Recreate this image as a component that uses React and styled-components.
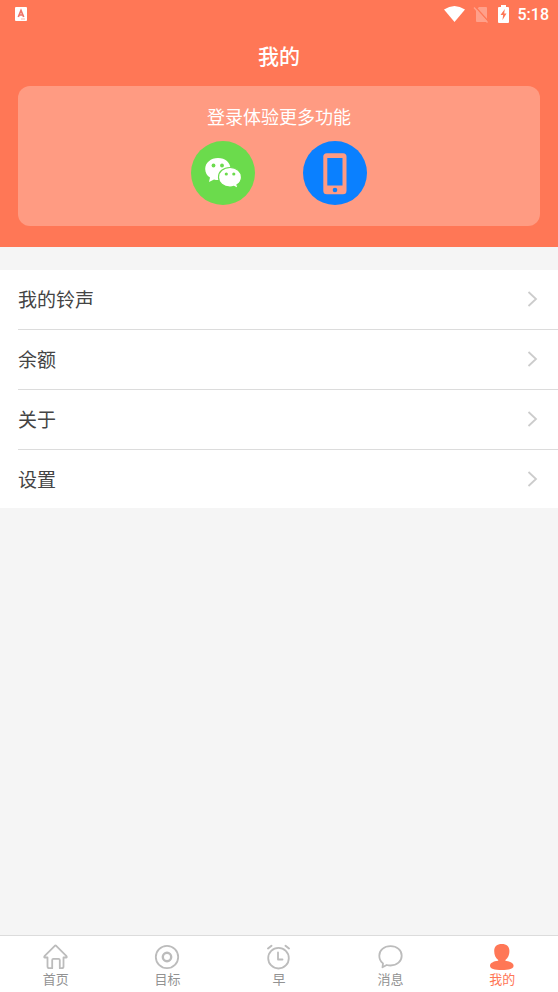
import React from "react";
import styled, { createGlobalStyle } from "styled-components";

const GlobalStyle = createGlobalStyle`
  * { box-sizing: border-box; }
  body { margin: 0; background: #f5f5f5; font-family: "Noto Sans CJK SC", sans-serif; }
  h1, h2, ul { margin: 0; padding: 0; }
  svg { display: block; flex: none; }
`;

const Page = styled.div`
  display: flex;
  flex-direction: column;
  min-height: 100vh;
`;

const Header = styled.header`
  padding: 0 18px 21px;
  background: #ff7756;
  color: #fff;
`;

const StatusBar = styled.div`
  display: flex;
  align-items: center;
  height: 28px;
  margin: 0 -9px 0 -4px;
`;

const StatusIcons = styled.div`
  display: flex;
  align-items: center;
  gap: 8px;
  margin-left: auto;
`;

const Clock = styled.time`
  font: 500 16px/28px Roboto, sans-serif;
  padding-top: 1px;
`;

const Title = styled.h1`
  height: 58px;
  font-size: 21px;
  font-weight: 500;
  line-height: 54px;
  text-align: center;
`;

const LoginCard = styled.section`
  padding: 16px 0 21px;
  border-radius: 12px;
  background: #ff9b82;
`;

const LoginTitle = styled.h2`
  font-size: 18px;
  font-weight: 400;
  line-height: 28px;
  text-align: center;
`;

const LoginOptions = styled.div`
  display: flex;
  justify-content: center;
  gap: 48px;
  margin-top: 11px;
`;

const LoginButton = styled.button`
  width: 64px;
  height: 64px;
  padding: 0;
  border: 0;
  border-radius: 50%;
  background: ${(p) => p.$color};
  cursor: pointer;
`;

const Menu = styled.ul`
  margin-top: 23px;
  padding-left: 18px;
  background: #fff;
  list-style: none;
`;

const MenuItem = styled.li`
  border-bottom: 1px solid #dcdcdc;
  &:last-child { border-bottom: 0; }
`;

const MenuLink = styled.a`
  display: flex;
  align-items: center;
  justify-content: space-between;
  height: 59px;
  padding: 0 20px 1px 0;
  color: #444;
  font-size: 19px;
  line-height: 28px;
  text-decoration: none;
  ${MenuItem}:last-child & { height: 58px; }
`;

const TabBar = styled.nav`
  display: grid;
  grid-template-columns: repeat(5, 1fr);
  margin-top: auto;
  border-top: 1px solid #dcdcdc;
  background: #fff;
`;

const Tab = styled.a`
  display: flex;
  flex-direction: column;
  align-items: center;
  height: 56px;
  padding-top: 8px;
  color: ${(p) => (p.$active ? "#ff7756" : "#929292")};
  font-size: 13px;
  line-height: 18px;
  text-decoration: none;
  svg { color: ${(p) => (p.$active ? "#ff7756" : "#bcbcbc")}; }
`;

const InputIcon = () => (
  <svg width="14" height="14" viewBox="0 0 14 14" aria-hidden="true">
    <rect x="1" width="12" height="14" rx="1" fill="#fff" />
    <path d="M4.300 10 7 3.500l2.700 6.500M5.300 8h3.400" fill="none" stroke="#ef7468" strokeWidth="1.700" />
    <path d="M7 12h4" stroke="#ffb5a5" />
  </svg>
);

const WifiIcon = () => (
  <svg width="21" height="17" viewBox="0 0 21 17" aria-hidden="true">
    <path d="M0 3.500Q10.500-3.500 21 3.500L10.500 16Z" fill="#fff" />
  </svg>
);

const NoSimIcon = () => (
  <svg width="16" height="17" viewBox="0 0 16 17" aria-hidden="true">
    <path d="M6 1h7q1 0 1 1v13q0 1-1 1H4q-1 0-1-1V4Z" fill="#ffa08a" />
    <path d="m2.500 1 13 14.500" stroke="#ff7756" strokeWidth="1.500" />
    <path d="m1 1.500 13.500 15" stroke="#ffa08a" strokeWidth="1.400" />
  </svg>
);

const BatteryIcon = () => (
  <svg width="13" height="19" viewBox="0 0 13 19" aria-hidden="true">
    <path d="M4 0h5v2h2q1 0 1 1v14q0 1-1 1H2q-1 0-1-1V3q0-1 1-1h2Z" fill="#fff" />
    <path d="M7.800 4 3.500 10h2.600l-.6 5 4-6.500H7.200Z" fill="#ff7756" />
  </svg>
);

const WeChatIcon = () => (
  <svg width="64" height="64" viewBox="0 0 64 64" aria-hidden="true">
    <path d="M27 17C19.800 17 14.200 21.700 14.200 28c0 3.600 1.800 6.600 4.800 8.600L18 41l5-2.600c1.300.4 2.700.6 4 .6C34.300 39 39.500 34.500 39.500 28S34.300 17 27 17Z" fill="#fff" />
    <path d="M39 26.500c-6.700 0-11.500 4.100-11.500 9.700S32.300 46 39 46c1.400 0 2.700-.2 3.900-.6l4.200 2.100-1.100-3.700c2.800-1.800 4.500-4.500 4.500-7.600 0-5.600-4.800-9.700-11.500-9.700Z" fill="#fff" stroke="#6bdb4c" strokeWidth="1.200" />
    <g fill="#6bdb4c">
      <circle cx="22.500" cy="24.500" r="1.900" /><circle cx="31" cy="24.500" r="1.900" />
      <circle cx="35.300" cy="33" r="1.600" /><circle cx="42.800" cy="33" r="1.600" />
    </g>
  </svg>
);

const PhoneIcon = () => (
  <svg width="64" height="64" viewBox="0 0 64 64" aria-hidden="true">
    <rect x="20.300" y="12.300" width="23.200" height="41" rx="3.500" fill="#ff9b82" />
    <rect x="24.300" y="17" width="15.200" height="27.500" fill="#0a80ff" />
    <circle cx="32" cy="49" r="2.300" fill="#0a80ff" />
  </svg>
);

const ChevronIcon = () => (
  <svg width="12" height="18" viewBox="0 0 12 18" fill="none" stroke="#ccc" strokeWidth="1.800" aria-hidden="true">
    <path d="m2.500 2 7.500 7-7.500 7" />
  </svg>
);

const TabIcon = ({ children }) => (
  <svg width="26" height="26" viewBox="0 0 26 26" fill="none" stroke="currentColor" strokeWidth="1.800" strokeLinejoin="round" strokeLinecap="round" aria-hidden="true">
    {children}
  </svg>
);

const menu = ["我的铃声", "余额", "关于", "设置"];

const tabs = [
  {
    label: "首页",
    icon: <path d="M11.800 1.800q.7-.6 1.400 0L23.500 12.200q.8 1.100-.5 1.300H20.500v9q0 1.700-1.700 1.700h-2V16q0-1.200-1.200-1.200h-5.200q-1.200 0-1.200 1.200v8.200H6.200Q4.500 24.200 4.500 22.500v-9H2q-1.300-.2-.5-1.300Z" />,
  },
  {
    label: "目标",
    icon: <><circle cx="13" cy="13" r="11.200" /><circle cx="13" cy="13" r="4.200" strokeWidth="2.400" /></>,
  },
  {
    label: "早",
    icon: <><circle cx="12.500" cy="14.200" r="10.300" /><path d="M12 8.500v7H16.500" /><path d="m2 4.500 3.500-2.700M19.500 1.800l3.500 2.700" strokeWidth="2" /></>,
  },
  {
    label: "消息",
    icon: <path d="M12.500 2.200C6 2.200 1.300 6.200 1.300 11.700c0 3.500 1.500 6 3.700 7.700L4.500 23.300l4.200-2.300c1.200.3 2.500.5 3.800.5 6.500 0 11.200-4.300 11.200-9.800S19 2.200 12.500 2.200Z" />,
  },
  {
    label: "我的",
    active: true,
    icon: <path d="M12.800 0C8 0 5.200 2.600 5.200 7c0 4 1.300 7 4 9v.8C4.500 17.300 1 19 1 21.800 1 25 5.500 26 12.800 26s11.800-1 11.800-4.200c0-2.800-3.500-4.500-8.200-5V16c2.700-2 4-5 4-9 0-4.400-2.800-7-7.600-7Z" fill="currentColor" stroke="none" />,
  },
];

export default function App() {
  return (
    <Page>
      <GlobalStyle />
      <Header>
        <StatusBar>
          <InputIcon />
          <StatusIcons>
            <WifiIcon />
            <NoSimIcon />
            <BatteryIcon />
            <Clock>5:18</Clock>
          </StatusIcons>
        </StatusBar>
        <Title>我的</Title>
        <LoginCard>
          <LoginTitle>登录体验更多功能</LoginTitle>
          <LoginOptions>
            <LoginButton type="button" $color="#6bdb4c" aria-label="微信登录"><WeChatIcon /></LoginButton>
            <LoginButton type="button" $color="#0a80ff" aria-label="手机登录"><PhoneIcon /></LoginButton>
          </LoginOptions>
        </LoginCard>
      </Header>
      <Menu>
        {menu.map((label) => (
          <MenuItem key={label}>
            <MenuLink href="#">{label}<ChevronIcon /></MenuLink>
          </MenuItem>
        ))}
      </Menu>
      <TabBar>
        {tabs.map(({ label, icon, active }) => (
          <Tab key={label} href="#" $active={active} aria-current={active ? "page" : undefined}>
            <TabIcon>{icon}</TabIcon>
            {label}
          </Tab>
        ))}
      </TabBar>
    </Page>
  );
}
